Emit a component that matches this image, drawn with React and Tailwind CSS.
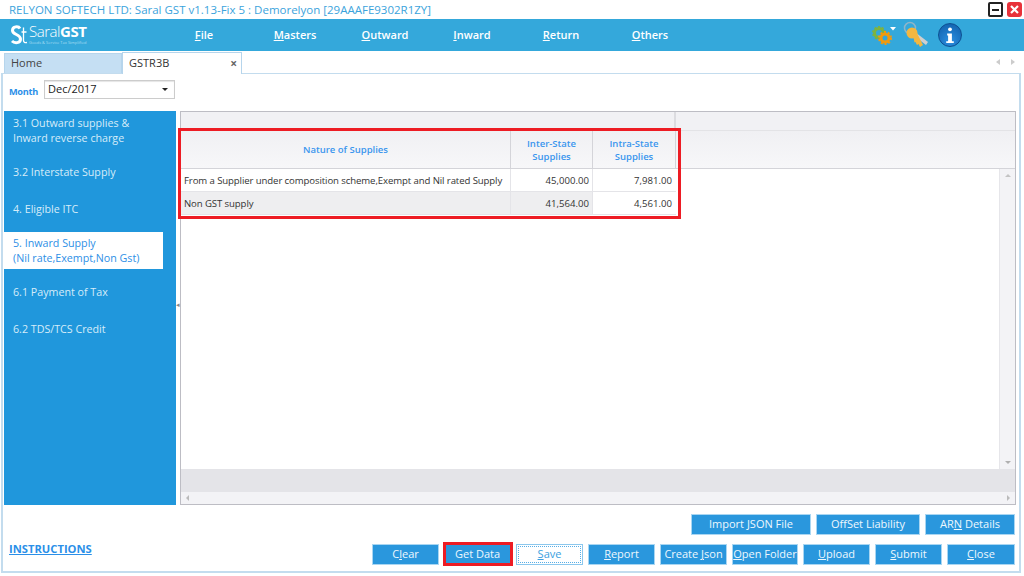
import React from "react";

const menus = [
  { label: "File", key: "F", rest: "ile", w: "w-[72px]" },
  { label: "Masters", key: "M", rest: "asters", w: "w-[110px]" },
  { label: "Outward", key: "O", rest: "utward", w: "w-[70px]" },
  { label: "Inward", key: "I", rest: "nward", w: "w-[104px]" },
  { label: "Return", key: "R", rest: "eturn", w: "w-[74px]" },
  { label: "Others", key: "O", rest: "thers", w: "w-[104px]" },
];

const sideItems = [
  { text: ["3.1 Outward supplies &", "Inward reverse charge"], h: "h-[39px]" },
  { text: ["3.2 Interstate Supply"], h: "h-[44px]" },
  { text: ["4. Eligible ITC"], h: "h-[38px] pb-[8px]" },
  { text: ["5. Inward Supply", "(Nil rate,Exempt,Non Gst)"], h: "h-[37px]", active: true },
  { text: ["6.1 Payment of Tax"], h: "h-[46px]" },
  { text: ["6.2 TDS/TCS Credit"], h: "h-[28px]" },
];

const rows = [
  { name: "From a Supplier under composition scheme,Exempt and Nil rated Supply", inter: "45,000.00", intra: "7,981.00" },
  { name: "Non GST supply", inter: "41,564.00", intra: "4,561.00", alt: true },
];

function Btn({ pre = "", k = "", post = "", w, focus = false }) {
  const label = (
    <span className="whitespace-pre">
      {pre}
      {k && <span className="underline">{k}</span>}
      {post}
    </span>
  );
  if (focus) {
    return (
      <button className={`${w} h-[21px] p-[1px] text-[11px] bg-white text-[#3b9fe0] border border-[#8cc8ee]`}>
        <span className="w-full h-full flex items-center justify-center border border-dotted border-[#58aee6]">{label}</span>
      </button>
    );
  }
  return (
    <button className={`${w} h-[21px] flex items-center justify-center text-[11px] bg-[#2a97dd] text-[#eef7fd] border border-[#a9d6f2]`}>
      {label}
    </button>
  );
}

export default function App() {
  return (
    <div className="relative w-[1024px] h-[576px] overflow-hidden bg-white font-['Open_Sans',sans-serif] text-[11px] text-[#333]">
      {/* title bar */}
      <div className="h-[19px] flex items-center pl-[9px] pr-[2px]">
        <span className="text-[#3ba3dc] text-[11.5px]">RELYON SOFTECH LTD: Saral GST v1.13-Fix 5 : Demorelyon [29AAAFE9302R1ZY]</span>
        <div className="ml-auto flex items-center gap-[4px]">
          <div className="w-[15px] h-[15px] border-2 border-[#222] rounded-[2px] flex items-center justify-center">
            <div className="w-[7px] h-[2px] bg-[#222]" />
          </div>
          <div className="w-[15px] h-[15px] bg-[#e8323a] rounded-[3px] text-white flex items-center justify-center">
            <svg width="9" height="9" viewBox="0 0 9 9"><path d="M1 1l7 7M8 1L1 8" stroke="#fff" strokeWidth="2.2" /></svg>
          </div>
        </div>
      </div>

      {/* menu bar */}
      <div className="h-[32px] bg-[#34a8db] flex items-center">
        <div className="w-[168px] pl-[10px] flex items-center text-white">
          <svg width="18" height="22" viewBox="0 0 18 22">
            <path d="M10 4.5C8.5 2 2.5 2 2.5 6.5c0 4.5 8 3.5 8 8.5 0 4.5-6 4.5-8.5 2" fill="none" stroke="#fff" strokeWidth="3" />
            <path d="M13.5 3.5v13c0 2 1.5 2.5 3.5 2M11.5 8h5" fill="none" stroke="#fff" strokeWidth="1.3" />
          </svg>
          <div className="flex flex-col leading-none ml-[1px] -mt-[1px]">
            <div className="text-[15px] leading-[15px] tracking-[-0.03em]">
              <span className="font-light">Saral</span>
              <span className="font-bold">GST</span>
            </div>
            <span className="text-[4px] leading-[5px] text-[#a8dcf2] mt-[1px]">Goods &amp; Service Tax Simplified</span>
          </div>
        </div>
        {menus.map((m) => (
          <div key={m.label} className={`${m.w} text-center text-white text-[11px] font-semibold`}>
            <span className="underline">{m.key}</span>
            {m.rest}
          </div>
        ))}
        <div className="ml-auto flex items-center mr-[62px]">
          {/* gears */}
          <svg width="26" height="24" viewBox="0 0 26 24">
            <circle cx="7" cy="10" r="4.5" fill="none" stroke="#7cb342" strokeWidth="3" />
            <circle cx="7" cy="10" r="6" fill="none" stroke="#7cb342" strokeWidth="2" strokeDasharray="2 1.8" />
            <circle cx="13" cy="15" r="4" fill="#34a8db" stroke="#f29a0e" strokeWidth="3" />
            <circle cx="13" cy="15" r="6" fill="none" stroke="#f29a0e" strokeWidth="2" strokeDasharray="2 1.8" />
            <path d="M18 4h6l-3 3.5z" fill="#fff" />
          </svg>
          {/* keys */}
          <svg width="28" height="28" viewBox="0 0 28 28" className="ml-[4px]">
            <circle cx="8" cy="7" r="5.5" fill="none" stroke="#8fb5c8" strokeWidth="1.5" />
            <path d="M13 11l13 10-2 3-13-10z" fill="#cfcfcf" />
            <circle cx="10" cy="12" r="5.5" fill="#f3b740" />
            <path d="M11 14l4-2 6 12-3 2-1.5-3-1.5 1-1.5-3-1 .5z" fill="#f3b740" />
          </svg>
          {/* info */}
          <div className="ml-[8px] w-[24px] h-[24px] rounded-full bg-[radial-gradient(circle_at_50%_75%,#2a8fe0,#0f5ca8)] border border-[#0d4f91] flex items-center justify-center">
            <svg width="10" height="17" viewBox="0 0 10 18">
              <circle cx="5" cy="2.5" r="2" fill="#fff" />
              <path d="M2 7h5v8h2v2H1v-2h2V9H2z" fill="#fff" />
            </svg>
          </div>
        </div>
      </div>

      {/* tabs */}
      <div className="h-[22px] flex items-end pl-[4px] relative">
        <div className="w-[118px] h-[20px] bg-[#c5dff3] border border-b-0 border-[#b6d5ec] flex items-center pl-[6px] text-[11px] text-[#444]">Home</div>
        <div className="w-[120px] h-[22px] -mb-[1px] z-10 bg-white border border-b-0 border-[#b6d5ec] flex items-center pl-[6px] pr-[4px] text-[11px] text-[#333]">
          GSTR3B
          <span className="ml-auto text-[#666] text-[12px] font-bold leading-none">×</span>
        </div>
        <div className="ml-auto flex items-center gap-[11px] mr-[9px] self-center">
          <div className="w-0 h-0 border-y-[3px] border-y-transparent border-r-[4px] border-r-[#ccc]" />
          <div className="w-0 h-0 border-y-[3px] border-y-transparent border-l-[4px] border-l-[#ccc]" />
        </div>
      </div>

      {/* main panel */}
      <div className="h-[500px] mx-[1px] w-[1020px] border-2 border-t-1 border-[#c3dcee] flex flex-col px-[1px]">
        {/* month row */}
        <div className="h-[37px] flex items-start pt-[6px] pl-[5px] shrink-0">
          <span className="text-[#2b8fe8] text-[9.2px] font-bold mt-[5px] w-[35px] tracking-[-0.3px]">Month</span>
          <div className="w-[131px] h-[19px] border border-[#ccc] shadow-[inset_0_1px_1px_#e5e5e5] flex items-center pl-[3px] pr-[6px] text-[#222] text-[11px]">
            Dec/2017
            <div className="ml-auto w-0 h-0 border-x-[3px] border-x-transparent border-t-[3px] border-t-[#222]" />
          </div>
        </div>

        {/* sidebar + grid */}
        <div className="h-[394px] flex shrink-0">
          <div className="w-[172px] bg-[#2097dc] relative shrink-0 pl-[9px] text-[10.7px] leading-[15px] text-[#d6ecf9]">
            {sideItems.map((s) => (
              <div
                key={s.text[0]}
                className={`${s.h} flex flex-col justify-center ${
                  s.active ? "bg-white text-[#2e8fe6] -ml-[9px] pl-[9px] w-[159px]" : ""
                }`}
              >
                {s.text.map((t) => (
                  <span key={t} className="whitespace-nowrap">{t}</span>
                ))}
              </div>
            ))}
          </div>
          <div className="w-[4px] flex items-center justify-center text-[#888] text-[7px] shrink-0 -translate-y-[3px]">◂</div>

          {/* grid */}
          <div className="w-[836px] border border-[#bdbdc4] flex flex-col shrink-0 text-[9.6px]">
            <div className="h-[19px] flex bg-[#f1f1f4] border-b border-[#e3e3e6] shrink-0">
              <div className="w-[495px] border-r-2 border-[#dcdce0]" />
            </div>
            <div className="h-[38px] flex bg-[linear-gradient(#f0f0f3,#f7f7f9)] border-b border-[#d4d4d9] shrink-0 text-[#3a96ee] text-[9.5px] font-semibold leading-[13px] text-center">
              <div className="w-[330px] border-r border-[#d4d4d9] flex items-center justify-center">Nature of Supplies</div>
              <div className="w-[82px] border-r border-[#d4d4d9] flex items-center justify-center">Inter-State<br />Supplies</div>
              <div className="w-[83px] border-r border-[#d4d4d9] flex items-center justify-center">Intra-State<br />Supplies</div>
            </div>
            <div className="flex-1 flex min-h-0">
              <div className="flex-1 bg-white">
                {rows.map((r) => (
                  <div key={r.name} className={`h-[23px] w-[495px] flex items-center border-b border-[#e4e4e8] text-[#333] ${r.alt ? "bg-[#eeeef0]" : "bg-white"}`}>
                    <div className="w-[330px] pl-[3px] pt-[2px] whitespace-nowrap border-r border-[#e4e4e8] h-full flex items-center tracking-[-0.1px]">{r.name}</div>
                    <div className="w-[82px] pr-[3px] pt-[2px] text-right border-r border-[#e4e4e8] h-full flex items-center justify-end">{r.inter}</div>
                    <div className={`w-[83px] pr-[4px] pt-[2px] text-right h-full flex items-center justify-end ${r.alt ? "bg-white" : ""}`}>{r.intra}</div>
                  </div>
                ))}
              </div>
              <div className="w-[16px] bg-[#f3f3f6] border-l border-[#e6e6ea] flex flex-col items-center justify-between py-[5px] shrink-0">
                <div className="w-0 h-0 border-x-[3px] border-x-transparent border-b-[3px] border-b-[#c4c4c4]" />
                <div className="w-0 h-0 border-x-[3px] border-x-transparent border-t-[3px] border-t-[#b0b0b0]" />
              </div>
            </div>
            <div className="h-[23px] bg-[#e4e4e8] shrink-0" />
            <div className="h-[12px] bg-[#f3f3f6] flex items-center justify-between px-[5px] shrink-0">
              <div className="w-0 h-0 border-y-[3px] border-y-transparent border-r-[3px] border-r-[#bbb]" />
              <div className="w-0 h-0 border-y-[3px] border-y-transparent border-l-[3px] border-l-[#bbb]" />
            </div>
          </div>
        </div>

        {/* footer */}
        <div className="flex-1 flex pl-[5px] pr-[3px] min-h-0">
          <a className="self-end mb-[13px] text-[#2b8fe8] text-[11.2px] font-bold underline">INSTRUCTIONS</a>
          <div className="ml-auto flex flex-col items-end gap-[9px] pt-[9px]">
            <div className="flex gap-[5px]">
              <Btn pre="Import JSON File" w="w-[120px]" />
              <Btn pre="OffSet Liability" w="w-[104px]" />
              <Btn pre="AR" k="N" post=" Details" w="w-[90px]" />
            </div>
            <div className="flex gap-[5px]">
              <Btn pre="C" k="l" post="ear" w="w-[67px]" />
              <Btn pre="Get Data" w="w-[67px]" />
              <Btn k="S" post="ave" w="w-[67px]" focus />
              <Btn k="R" post="eport" w="w-[67px]" />
              <Btn pre="Create " k="J" post="son" w="w-[67px]" />
              <Btn k="O" post="pen Folder" w="w-[66px]" />
              <Btn k="U" post="pload" w="w-[67px]" />
              <Btn k="S" post="ubmit" w="w-[67px]" />
              <Btn k="C" post="lose" w="w-[68px]" />
            </div>
          </div>
        </div>
      </div>

      {/* red annotation boxes */}
      <div className="absolute left-[178px] top-[128px] w-[503px] h-[91px] border-[3px] border-[#ed1c24]" />
      <div className="absolute left-[443px] top-[542px] w-[70px] h-[24px] border-[3px] border-[#ed1c24]" />
    </div>
  );
}
